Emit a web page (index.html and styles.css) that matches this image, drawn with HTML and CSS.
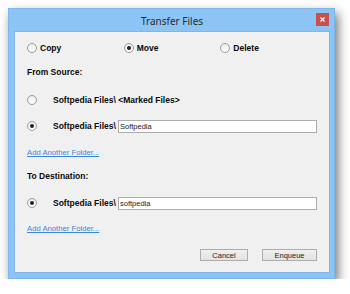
FILE: index.html
```html
<!DOCTYPE html>
<html>
<head>
<meta charset="utf-8">
<link rel="stylesheet" href="styles.css">
</head>
<body>
<div class="window">
  <div class="titlebar">
    <span class="title">Transfer Files</span>
    <span class="close"><svg width="5" height="5" viewBox="0 0 5 5"><path d="M0.5 0.5 L4.5 4.5 M4.5 0.5 L0.5 4.5" stroke="#fff" stroke-width="1.2"/></svg></span>
  </div>
  <div class="client">
    <div class="row options">
      <label class="opt"><span class="radio"></span><b>Copy</b></label>
      <label class="opt"><span class="radio checked"></span><b>Move</b></label>
      <label class="opt"><span class="radio"></span><b>Delete</b></label>
    </div>
    <div class="row heading g10"><b>From Source:</b></div>
    <div class="row item g14"><span class="radio"></span><b>Softpedia Files\ &lt;Marked Files&gt;</b></div>
    <div class="row item g12"><span class="radio checked"></span><b class="lbl">Softpedia Files\</b><span class="field">Softpedia</span></div>
    <div class="row g12"><a class="link">Add Another Folder...</a></div>
    <div class="row heading g10"><b>To Destination:</b></div>
    <div class="row item g13"><span class="radio checked"></span><b class="lbl">Softpedia Files\</b><span class="field">softpedia</span></div>
    <div class="row g11"><a class="link">Add Another Folder...</a></div>
    <div class="buttons">
      <span class="btn cancel">Cancel</span>
      <span class="btn enqueue">Enqueue</span>
    </div>
  </div>
</div>
</body>
</html>
```
FILE: styles.css
```css
* { box-sizing: border-box; }
body {
  margin: 0;
  background: #ffffff;
  font-family: "Liberation Sans", Arial, sans-serif;
}
.window {
  margin: 8px 0 0 8px;
  width: 327px;
  height: 271px;
  background: #8cc4f6;
  border: 1px solid #7fb5e8;
  padding: 0 4px 5px 5px;
  display: flex;
  flex-direction: column;
  box-shadow: 3px 5px 10px rgba(0, 0, 0, 0.55);
}
.titlebar {
  height: 22px;
  position: relative;
  display: flex;
  align-items: center;
  justify-content: center;
}
.title {
  font-family: "Noto Sans", sans-serif;
  font-size: 10px;
  color: #2b2b2b;
  margin-top: 1px;
}
.close {
  position: absolute;
  right: 1px;
  top: 4px;
  width: 13px;
  height: 13px;
  background: #c85150;
  display: flex;
  align-items: center;
  justify-content: center;
}
.client {
  flex: 1;
  background: #f0f0f0;
  border: 1px solid #7fb5e8;
  padding: 9px 12px 0 12px;
  display: flex;
  flex-direction: column;
  color: #0a0a0a;
}
.row {
  height: 14px;
  display: flex;
  align-items: center;
  font-size: 8.5px;
}
.g10 { margin-top: 10px; }
.g11 { margin-top: 11px; }
.g12 { margin-top: 12px; }
.g13 { margin-top: 13px; }
.g14 { margin-top: 14px; }
b { font-weight: bold; }
.lbl { width: 65px; flex: none; white-space: nowrap; }
.opt {
  width: 97px;
  display: flex;
  align-items: center;
}
.radio {
  width: 10px;
  height: 10px;
  border-radius: 50%;
  border: 1px solid #9c9c9c;
  background: linear-gradient(#ececec, #ffffff);
  flex: none;
  display: flex;
  align-items: center;
  justify-content: center;
  margin-right: 3px;
}
.radio.checked::after {
  content: "";
  width: 4px;
  height: 4px;
  border-radius: 50%;
  background: #222;
}
.item .radio { margin-right: 16px; }
.field {
  width: 199px;
  height: 13px;
  background: #fff;
  border: 1px solid #acacac;
  font-size: 7.5px;
  font-weight: normal;
  padding-left: 1px;
  display: flex;
  align-items: center;
  color: #222;
}
.link {
  color: #3f83dc;
  text-decoration: underline;
  font-size: 7.7px;
}
.buttons {
  margin-top: 14px;
  display: flex;
  justify-content: flex-end;
  gap: 14px;
}
.btn {
  height: 12px;
  border: 1px solid #adadad;
  background: linear-gradient(#f0f0f0, #e2e2e2);
  font-size: 7.5px;
  color: #222;
  display: flex;
  align-items: center;
  justify-content: center;
}
.cancel { width: 48px; }
.enqueue { width: 55px; }
```
